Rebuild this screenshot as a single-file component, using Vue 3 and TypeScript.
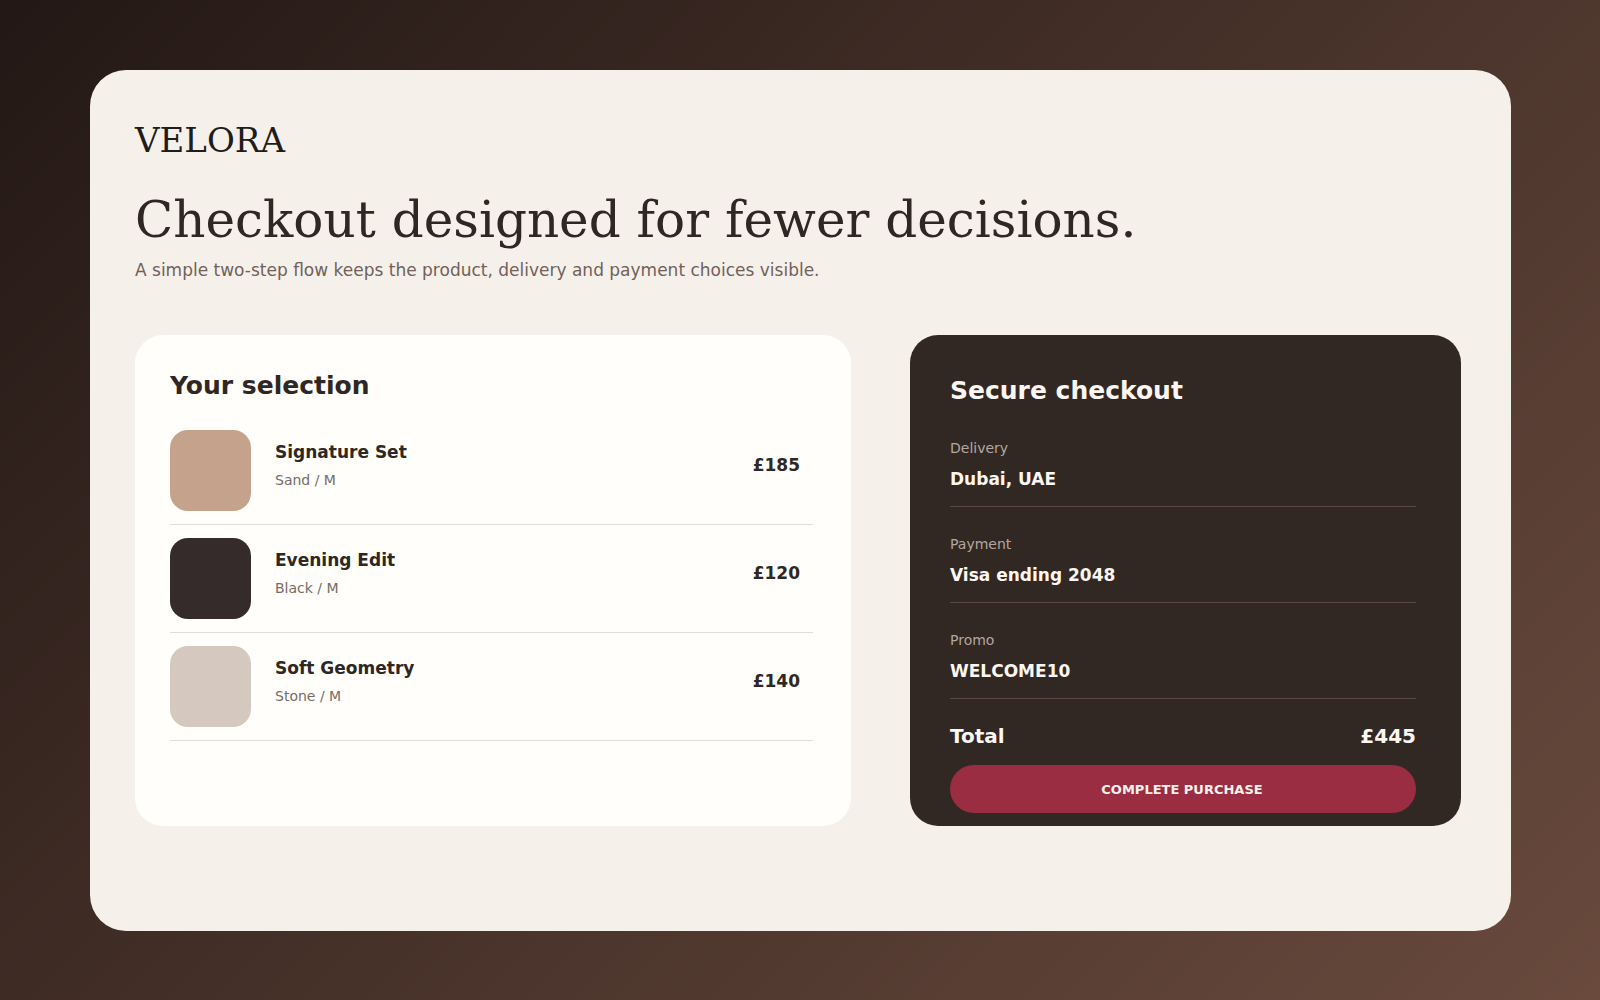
<script setup lang="ts">
interface Product {
  name: string
  variant: string
  price: number
  tone: string
}

interface Detail {
  label: string
  value: string
}

const products: Product[] = [
  { name: 'Signature Set', variant: 'Sand / M', price: 185, tone: 'sand' },
  { name: 'Evening Edit', variant: 'Black / M', price: 120, tone: 'black' },
  { name: 'Soft Geometry', variant: 'Stone / M', price: 140, tone: 'stone' },
]

const details: Detail[] = [
  { label: 'Delivery', value: 'Dubai, UAE' },
  { label: 'Payment', value: 'Visa ending 2048' },
  { label: 'Promo', value: 'WELCOME10' },
]

const total = products.reduce((sum, product) => sum + product.price, 0)
</script>

<template>
  <div class="page">
    <main class="shell">
      <header>
        <p class="brand">VELORA</p>
        <h1 class="title">Checkout designed for fewer decisions.</h1>
        <p class="lead">A simple two-step flow keeps the product, delivery and payment choices visible.</p>
      </header>

      <div class="columns">
        <section class="panel selection">
          <h2 class="panel-title">Your selection</h2>
          <ul class="products">
            <li v-for="product in products" :key="product.name" class="product">
              <span class="swatch" :class="product.tone"></span>
              <div class="info">
                <h3 class="name">{{ product.name }}</h3>
                <p class="variant">{{ product.variant }}</p>
              </div>
              <span class="price">£{{ product.price }}</span>
            </li>
          </ul>
        </section>

        <section class="panel checkout">
          <h2 class="panel-title">Secure checkout</h2>
          <dl class="details">
            <div v-for="detail in details" :key="detail.label" class="detail">
              <dt>{{ detail.label }}</dt>
              <dd>{{ detail.value }}</dd>
            </div>
          </dl>
          <div class="total">
            <span>Total</span>
            <span>£{{ total }}</span>
          </div>
          <button type="button" class="purchase">COMPLETE PURCHASE</button>
        </section>
      </div>
    </main>
  </div>
</template>

<style>
body {
  margin: 0;
}
</style>

<style scoped>
.page {
  box-sizing: border-box;
  display: flex;
  min-height: 100vh;
  padding: 70px 89px 69px 90px;
  background: linear-gradient(135deg, #231815, #694a3d);
  font-family: "DejaVu Sans", Verdana, sans-serif;
  color: #2e2723;
}

.shell {
  box-sizing: border-box;
  flex: 1;
  min-width: 0;
  padding: 50px 50px 50px 45px;
  border-radius: 36px;
  background: #f6f0ea;
}

h1,
h2,
h3,
p,
ul,
dl,
dd {
  margin: 0;
  padding: 0;
}

.brand {
  font-family: "DejaVu Serif", Georgia, serif;
  font-size: 34px;
  line-height: 40px;
  color: #211c19;
}

.title {
  margin-top: 30px;
  font-family: "DejaVu Serif", Georgia, serif;
  font-size: 50px;
  font-weight: 400;
  line-height: 60px;
}

.lead {
  margin-top: 10px;
  font-size: 17px;
  line-height: 20px;
  color: #70615a;
}

.columns {
  display: grid;
  grid-template-columns: 716fr 551fr;
  gap: 59px;
  margin-top: 55px;
}

.panel {
  border-radius: 28px;
}

.panel-title {
  font-size: 25px;
  font-weight: 700;
  line-height: 30px;
}

.selection {
  padding: 36px 38px 36px 35px;
  background: #fffefa;
}

.products {
  margin-top: 16px;
  list-style: none;
}

.product {
  display: flex;
  align-items: center;
  gap: 24px;
  padding: 13px 13px 13px 0;
  border-bottom: 1px solid #e0dedb;
}

.swatch {
  flex: none;
  width: 81px;
  height: 81px;
  border-radius: 18px;
}

.sand {
  background: #c5a28b;
}

.black {
  background: #352b2a;
}

.stone {
  background: #d5c8bf;
}

.info {
  flex: 1;
  padding-bottom: 10px;
}

.name {
  font-size: 17px;
  line-height: 20px;
}

.variant {
  margin-top: 8px;
  font-size: 14px;
  line-height: 20px;
  color: #766c66;
}

.price {
  padding-bottom: 12px;
  font-size: 17px;
  font-weight: 700;
  line-height: 20px;
}

.checkout {
  padding: 41px 45px 13px 40px;
  background: #312823;
  color: #fcf6f2;
}

.details {
  margin-top: 5px;
}

.detail {
  padding: 27px 0 17px;
  border-bottom: 1px solid #5e4841;
}

.detail dt {
  font-size: 14px;
  line-height: 20px;
  color: #b5a69f;
}

.detail dd {
  margin-top: 11px;
  font-size: 17px;
  font-weight: 700;
  line-height: 20px;
}

.total {
  display: flex;
  justify-content: space-between;
  margin-top: 22px;
  font-size: 20px;
  font-weight: 700;
  line-height: 30px;
}

.purchase {
  display: block;
  width: 100%;
  height: 48px;
  margin-top: 14px;
  padding: 2px 2px 0 0;
  border: 0;
  border-radius: 24px;
  background: #9a2d42;
  color: #fcf0ea;
  font-family: inherit;
  font-size: 13px;
  font-weight: 700;
  line-height: 20px;
  cursor: pointer;
}

@media (max-width: 900px) {
  .page {
    padding: 24px;
  }

  .columns {
    grid-template-columns: 1fr;
    gap: 24px;
  }
}
</style>
